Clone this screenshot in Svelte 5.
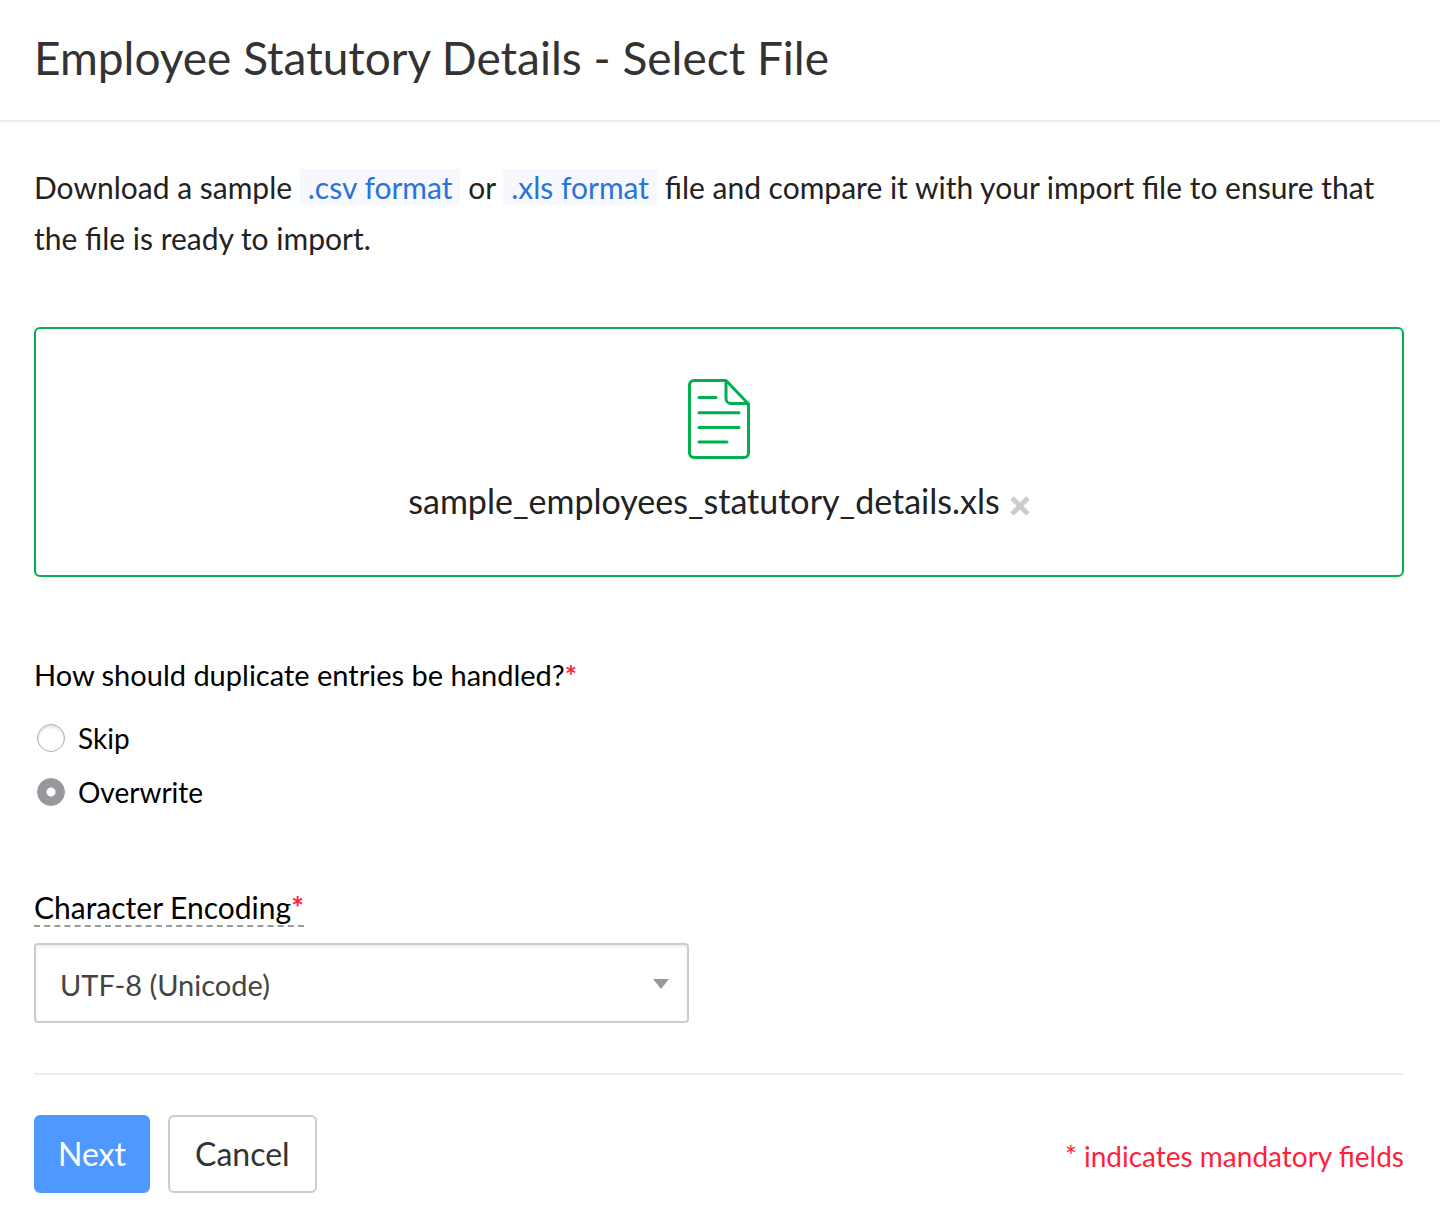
<script>
    let duplicates = $state('overwrite')
    let encoding = $state('utf8')
    let file = $state('sample_employees_statutory_details.xls')

    function removeFile(){
        file = ''
    }
</script>

<main>
    <header>
        <h1>Employee Statutory Details - Select File</h1>
    </header>
    <form>
        <p class="intro">
            Download a sample <a href="#csv">.csv format</a> or <a href="#xls">.xls format</a> file and compare it with your import file to ensure that the file is ready to import.
        </p>

        <section class="dropzone">
            {#if file}
                <svg class="file-icon" width="64" height="82" viewBox="0 0 64 82" fill="none" stroke="#00b050" stroke-width="3" stroke-linecap="round" stroke-linejoin="round">
                    <path d="M39 2.500H7a4.500 4.500 0 0 0-4.500 4.500v68a4.500 4.500 0 0 0 4.500 4.500h50a4.500 4.500 0 0 0 4.500-4.500V26z" />
                    <path d="M39 3v17.500a5 5 0 0 0 5 5h17" />
                    <path d="M12 19.500h17M12 34.800h40M12 49.500h40M12 64h28" />
                </svg>
                <div class="file-name">
                    <span>{file}</span>
                    <button type="button" class="remove" aria-label="Remove file" onclick={removeFile}>
                        <svg width="20" height="20" viewBox="0 0 20 20" stroke="#cccccc" stroke-width="5">
                            <path d="M2 2l16 16M18 2L2 18" />
                        </svg>
                    </button>
                </div>
            {/if}
        </section>

        <fieldset>
            <legend>How should duplicate entries be handled?<span class="star">*</span></legend>
            <label class="option">
                <input type="radio" name="duplicates" value="skip" bind:group={duplicates}>
                Skip
            </label>
            <label class="option">
                <input type="radio" name="duplicates" value="overwrite" bind:group={duplicates}>
                Overwrite
            </label>
        </fieldset>

        <div class="encoding">
            <label for="encoding">Character Encoding<span class="star">*</span></label>
            <div class="select">
                <select id="encoding" bind:value={encoding}>
                    <option value="utf8">UTF-8 (Unicode)</option>
                </select>
                <svg width="16" height="10" viewBox="0 0 16 10">
                    <path d="M0 0h16L8 10z" fill="#999999" />
                </svg>
            </div>
        </div>

        <footer>
            <button type="button" class="next">Next</button>
            <button type="button" class="cancel">Cancel</button>
            <p class="mandatory">* indicates mandatory fields</p>
        </footer>
    </form>
</main>

<style>
    :global(body){
        background-color: #ffffff;
    }

    main{
        font-family: Lato, "Liberation Sans", sans-serif;
        font-size: 29px;
        line-height: 36px;
        color: #000000;
    }

    header{
        padding: 26px 34px 30px;
        border-bottom: 2px solid #ebebeb;
    }

    h1{
        margin: 0;
        font-size: 46px;
        line-height: 64px;
        font-weight: 400;
        color: #333333;
    }

    form{
        padding: 40px 36px 24px 34px;
    }

    .intro{
        margin: 0;
        font-size: 30px;
        line-height: 51px;
        color: #222222;
    }

    .intro a{
        padding: 0 8px;
        background-color: #f6f8fe;
        color: #2a73d9;
        text-decoration: none;
    }

    .dropzone{
        display: flex;
        flex-direction: column;
        align-items: center;
        gap: 19px;
        box-sizing: border-box;
        min-height: 250px;
        margin-top: 63px;
        padding: 49px 24px 48px;
        border: 2px solid #00b050;
        border-radius: 6px;
    }

    .file-icon{
        display: block;
    }

    .file-name{
        display: flex;
        align-items: center;
        gap: 10px;
        font-size: 34px;
        line-height: 44px;
        color: #222222;
    }

    button{
        font-family: inherit;
        cursor: pointer;
    }

    .remove{
        display: flex;
        padding: 10px 0 0;
        border: none;
        background: none;
    }

    fieldset{
        margin: 80px 0 0;
        padding: 0;
        border: none;
    }

    legend{
        padding: 0 0 27px;
    }

    .star{
        font-weight: 700;
        color: #ff1f3d;
    }

    .option{
        display: flex;
        align-items: center;
        gap: 13px;
        width: fit-content;
        font-size: 28px;
    }

    .option + .option{
        margin-top: 18px;
    }

    input[type="radio"]{
        appearance: none;
        width: 28px;
        height: 28px;
        margin: 0 0 0 3px;
        border: 1px solid #b0b0b0;
        border-radius: 50%;
        background-color: #ffffff;
        box-shadow: inset 0 2px 3px #dddddd;
    }

    input[type="radio"]:checked{
        border-color: #98979c;
        background: radial-gradient(circle, #ffffff 4px, #98979c 5px);
        box-shadow: none;
    }

    .encoding{
        display: flex;
        flex-direction: column;
        align-items: flex-start;
        gap: 16px;
        margin-top: 79px;
    }

    .encoding label{
        border-bottom: 2px dashed #999999;
        font-size: 30px;
    }

    .select{
        position: relative;
        width: 100%;
        max-width: 655px;
    }

    select{
        appearance: none;
        display: block;
        width: 100%;
        height: 80px;
        padding: 2px 60px 0 24px;
        border: 2px solid #cccccc;
        border-radius: 4px;
        background-color: #ffffff;
        box-shadow: inset 0 2px 3px #eeeeee;
        font-family: inherit;
        font-size: 29px;
        color: #444444;
    }

    .select svg{
        position: absolute;
        top: 36px;
        right: 20px;
        pointer-events: none;
    }

    footer{
        display: flex;
        align-items: center;
        gap: 18px;
        margin-top: 50px;
        padding-top: 40px;
        border-top: 2px solid #eeeeee;
    }

    .next,
    .cancel{
        height: 78px;
        padding: 0 25px 2px;
        border: 2px solid #cccccc;
        border-radius: 6px;
        background-color: #ffffff;
        font-size: 32px;
        color: #333333;
    }

    .next{
        padding: 0 22px 2px;
        border-color: #4f98ff;
        background-color: #4f98ff;
        color: #ffffff;
    }

    .mandatory{
        margin: 4px 0 0 auto;
        font-size: 28px;
        color: #ff1f3d;
    }
</style>
